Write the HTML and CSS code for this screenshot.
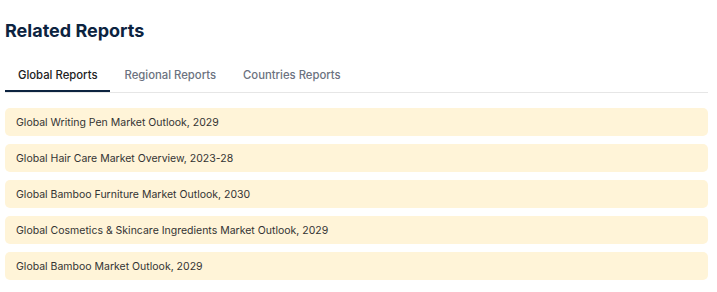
FILE: index.html
```html
<!DOCTYPE html>
<html lang="en">

<head>
    <meta charset="UTF-8">
    <meta name="viewport" content="width=device-width, initial-scale=1.0">
    <title>Related Reports</title>
    <link rel="stylesheet" href="styles.css">
</head>

<body>
    <section class="related">
        <h2>Related Reports</h2>
        <div class="tabs">
            <a href="#" class="tab current">Global Reports</a>
            <a href="#" class="tab">Regional Reports</a>
            <a href="#" class="tab">Countries Reports</a>
        </div>
        <ul class="reportList">
            <li><a href="#">Global Writing Pen Market Outlook, 2029</a></li>
            <li><a href="#">Global Hair Care Market Overview, 2023-28</a></li>
            <li><a href="#">Global Bamboo Furniture Market Outlook, 2030</a></li>
            <li><a href="#">Global Cosmetics &amp; Skincare Ingredients Market Outlook, 2029</a></li>
            <li><a href="#">Global Bamboo Market Outlook, 2029</a></li>
        </ul>
    </section>
</body>

</html>
```

FILE: styles.css
```css
body {
    margin: 0;
    font-family: Inter, "Noto Sans", sans-serif;
    background-color: #ffffff;
}

.related {
    width: 703px;
    padding-left: 5px;
}

h2 {
    margin: 19px 0 0;
    font-size: 18px;
    line-height: 24px;
    font-weight: 700;
    color: #0c2340;
}

.tabs {
    display: flex;
    gap: 1px;
    margin-top: 14px;
    border-bottom: 1px solid #e6e6e6;
}

.tab {
    padding: 10px 13px 7px;
    font-size: 11.3px;
    line-height: 16px;
    font-weight: 500;
    color: #6b7280;
    text-decoration: none;
    border-bottom: 2px solid transparent;
}

.tab.current {
    color: #222;
    border-bottom-color: #0c2340;
}

.reportList {
    list-style: none;
    margin: 15px 0 0;
    padding: 0;
    display: flex;
    flex-direction: column;
    gap: 8px;
}

.reportList a {
    display: flex;
    align-items: center;
    height: 28px;
    padding: 0 11px;
    background: #fff4d8;
    border-radius: 5px;
    font-size: 10.5px;
    color: #333;
    text-decoration: none;
}
```
